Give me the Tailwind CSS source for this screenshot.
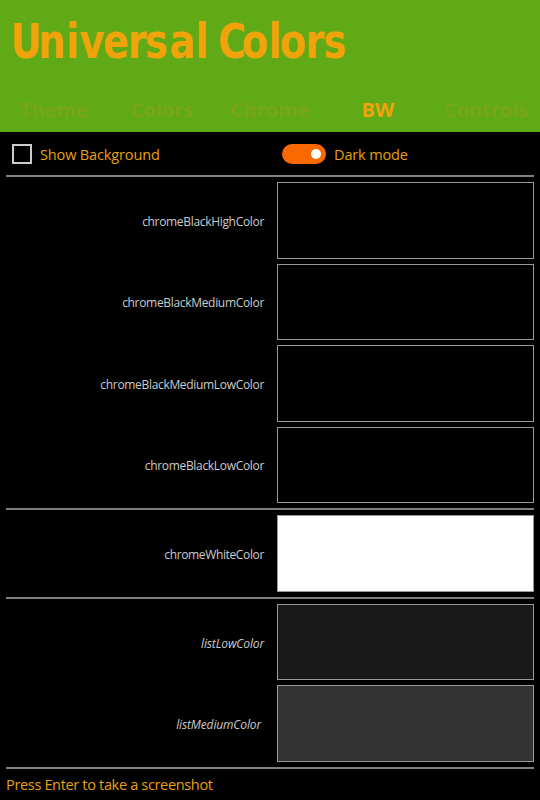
<!DOCTYPE html>
<html lang="en">
<head>
<meta charset="utf-8">
<title>Universal Colors</title>
<script src="https://cdn.jsdelivr.net/npm/@tailwindcss/browser@4"></script>
</head>
<body class="w-[540px] h-[800px] overflow-hidden bg-black font-['Open_Sans','Noto_Sans',sans-serif] text-[#e8a00c]">
<header class="h-[132px] bg-[#60a917] flex flex-col">
  <svg class="h-[86px] w-full shrink-0" viewBox="0 0 540 86" fill="#f0a30a" font-family="'DejaVu Sans', sans-serif" font-weight="bold" font-size="48" text-anchor="middle">
    <g transform="scale(.8 1)">
      <text y="58" x="32.5 65 90.6 115 145 171.5 195.6 228.1 252.5">Universal</text>
      <text y="58" x="290 318.8 343.8 366.3 393.8 418.8">Colors</text>
    </g>
  </svg>
  <nav class="grid grid-cols-5 text-center text-[20px] leading-[48px] font-bold text-[#78a616]">
    <span>Theme</span><span>Colors</span><span>Chrome</span><span class="text-[#f0a30a]">BW</span><span>Controls</span>
  </nav>
</header>
<main class="px-[6px]">
  <div class="h-[43px] grid grid-cols-[270px_1fr] pl-[6px] text-[14.5px] tracking-[-0.14px] leading-[20px] pt-[12px]">
    <div class="flex gap-2"><span class="size-5 border-2 border-[#ccc]"></span><span class="pt-px">Show Background</span></div>
    <div class="flex gap-2"><span class="w-11 h-5 rounded-full bg-[#fa6800] flex items-center justify-end pr-[5px]"><span class="size-[10px] rounded-full bg-white"></span></span><span class="pt-px">Dark mode</span></div>
  </div>
  <section class="border-t-2 border-[#808080] h-[333px] pt-[5px] grid grid-cols-[258px_257px] gap-x-[13px] grid-rows-[77px_76px_77px_76px] gap-y-[5px] text-right text-xs tracking-[-0.32px] leading-[79px] text-[#ccc]">
    <span>chromeBlackHighColor</span><div class="border border-[#999]"></div>
    <span class="leading-[77px]">chromeBlackMediumColor</span><div class="border border-[#999]"></div>
    <span>chromeBlackMediumLowColor</span><div class="border border-[#999]"></div>
    <span class="leading-[77px]">chromeBlackLowColor</span><div class="border border-[#999]"></div>
  </section>
  <section class="border-t-2 border-[#808080] h-[89px] pt-[5px] grid grid-cols-[258px_257px] gap-x-[13px] grid-rows-[77px] text-right text-xs tracking-[-0.36px] leading-[80px] text-[#ccc]">
    <span>chromeWhiteColor</span><div class="border border-[#999] bg-white"></div>
  </section>
  <section class="border-y-2 border-[#808080] h-[172px] pt-[5px] grid grid-cols-[258px_257px] gap-x-[13px] grid-rows-[76px_77px] gap-y-[5px] text-right text-xs italic tracking-[-0.14px] leading-[79px] text-[#ccc]">
    <span>listLowColor</span><div class="border border-[#999] bg-[#191919]"></div>
    <span class="pr-[3px]">listMediumColor</span><div class="border border-[#999] bg-[#333]"></div>
  </section>
  <p class="text-[14.5px] tracking-[-0.33px] leading-[20px] pt-[6px]">Press Enter to take a screenshot</p>
</main>
</body>
</html>
